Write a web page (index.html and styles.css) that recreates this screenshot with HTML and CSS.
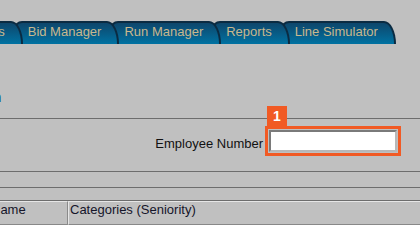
FILE: index.html
```html
<!DOCTYPE html>
<html lang="en">
<head>
    <meta charset="UTF-8">
    <meta name="viewport" content="width=device-width, initial-scale=1.0">
    <title>Bid Run - Employee Lookup</title>
    <link rel="stylesheet" href="styles.css">
</head>
<body>
    <div class="page">
        <ul class="tabs">
            <li class="tab"><a href="#">Schedules</a></li>
            <li class="tab"><a href="#">Bid Manager</a></li>
            <li class="tab"><a href="#">Run Manager</a></li>
            <li class="tab"><a href="#">Reports</a></li>
            <li class="tab"><a href="#">Line Simulator</a></li>
        </ul>

        <div class="crumbs">
            <a href="#">Return</a>
        </div>

        <div class="search-row">
            <label for="empNo">Employee Number</label>
            <div class="highlight">
                <span class="step-badge">1</span>
                <input type="text" id="empNo">
            </div>
        </div>

        <div class="bar bar-tall"></div>
        <div class="bar bar-short"></div>

        <table class="results">
            <thead>
                <tr>
                    <th class="col-name">Name</th>
                    <th class="col-cats">Categories (Seniority)</th>
                </tr>
            </thead>
        </table>
    </div>
</body>
</html>
```

FILE: styles.css
```css
* {
    margin: 0;
    padding: 0;
    box-sizing: border-box;
}

body {
    font-family: "Liberation Sans", Arial, sans-serif;
    font-size: 13px;
    background-color: #fff;
    overflow: hidden;
}

.page {
    background-color: #c0c0c0;
    padding-top: 21px;
    overflow: hidden;
}

/* tab strip */
.tabs {
    list-style: none;
    display: flex;
    align-items: flex-end;
    margin-left: -70px;
}

.tab {
    position: relative;
    height: 23px;
    padding: 0 16px 4px 12px;
    background: linear-gradient(to bottom, #0e466b, #0072a2);
    border: 2px solid #0b2b42;
    border-bottom: none;
    border-top-left-radius: 8px;
    border-top-right-radius: 12px 23px;
    line-height: 17px;
    white-space: nowrap;
}

.tab + .tab {
    margin-left: -9px;
}

.tab:nth-child(1) { z-index: 5; }
.tab:nth-child(2) { z-index: 4; }
.tab:nth-child(3) { z-index: 3; }
.tab:nth-child(4) { z-index: 2; }
.tab:nth-child(5) { z-index: 1; }

.tab a {
    color: #c8b88e;
    text-decoration: none;
}

/* link above the search row */
.crumbs {
    padding: 44px 0 12px;
    line-height: 17px;
}

.crumbs a {
    display: inline-block;
    margin-left: -47px;
    font-size: 15px;
    font-weight: bold;
    color: #0f5b82;
    text-decoration: none;
}

/* employee search */
.search-row {
    display: flex;
    justify-content: flex-end;
    align-items: flex-start;
    gap: 2px;
    border-top: 1px solid #6d6d6d;
    padding: 7px 19px 15px 0;
}

.search-row label {
    padding-top: 10px;
    line-height: 15px;
    color: #111;
}

.highlight {
    position: relative;
    border: 3px solid #f15a24;
    padding: 1px;
}

.step-badge {
    position: absolute;
    left: -1px;
    top: -23px;
    width: 20px;
    height: 20px;
    background-color: #f15a24;
    color: #fff;
    font-weight: bold;
    font-size: 14px;
    line-height: 20px;
    text-align: center;
}

.highlight input {
    display: block;
    width: 128px;
    height: 22px;
    border: 2px solid;
    border-color: #7a7a7a #b8b8b8 #b8b8b8 #7a7a7a;
    background-color: #fff;
    font-family: inherit;
    font-size: 13px;
}

/* empty bars */
.bar {
    border-top: 1px solid #6d6d6d;
}

.bar-tall {
    height: 16px;
}

.bar-short {
    height: 13px;
}

/* results table */
.results {
    margin-left: -11px;
    width: 460px;
    border-collapse: separate;
    border-spacing: 0;
    border-top: 1px solid #6d6d6d;
}

.results th {
    text-align: left;
    font-weight: normal;
    color: #15152a;
    line-height: 16px;
    height: 23px;
    padding: 0 0 6px 1px;
    border-top: 1px solid #e6e6e6;
    border-bottom: 1px solid #888;
}

.results .col-name {
    width: 79px;
    padding-left: 2px;
    border-right: 1px solid #8a8a8a;
}

.results .col-cats {
    border-left: 1px solid #e6e6e6;
}
```
